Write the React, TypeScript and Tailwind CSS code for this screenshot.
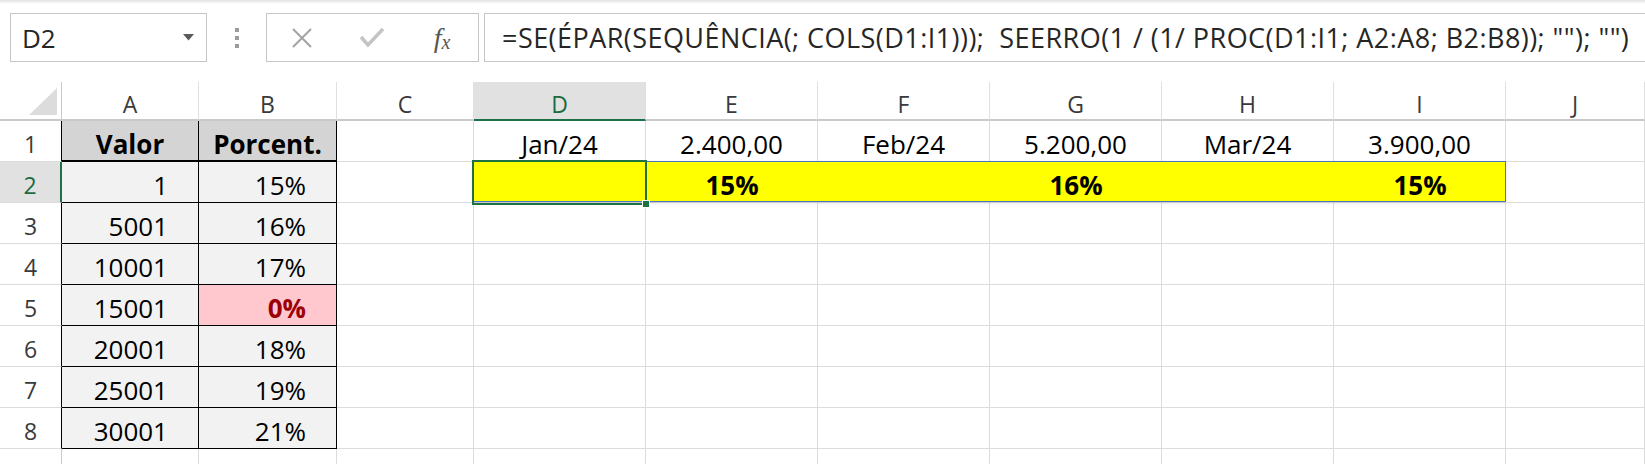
import React from 'react';

// column template shared by the header row and every sheet row
const GRID = 'grid grid-cols-[62px_137px_138px_137px_repeat(6,172px)_1fr]';
const LETTERS = ['A', 'B', 'C', 'D', 'E', 'F', 'G', 'H', 'I', 'J'];

const LOOKUP: [string, string][] = [
  ['1', '15%'],
  ['5001', '16%'],
  ['10001', '17%'],
  ['15001', '0%'],
  ['20001', '18%'],
  ['25001', '19%'],
  ['30001', '21%'],
];

const MONTHS = ['Jan/24', '2.400,00', 'Feb/24', '5.200,00', 'Mar/24', '3.900,00'];
const RESULTS = ['', '15%', '', '16%', '', '15%'];

const FORMULA = '=SE(ÉPAR(SEQUÊNCIA(; COLS(D1:I1)));  SEERRO(1 / (1/ PROC(D1:I1; A2:A8; B2:B8)); ""); "")';

const GRIDLINE = 'border-r border-b border-[#dcdcdc]';

function Toolbar() {
  return (
    <div className="h-[82px]">
      <div className="h-[4px] bg-gradient-to-b from-[#e2e2e2] to-white" />
      <div className="flex items-start pt-[9px] pl-[10px]">
        {/* name box */}
        <div className="w-[197px] h-[49px] border border-[#c6c6c6] flex items-center justify-between pl-[11px] pr-[12px]">
          <span className="text-[26px] leading-none text-[#262626]">D2</span>
          <svg width="11" height="7" viewBox="0 0 11 7">
            <path d="M0 0 L11 0 L5.5 6.5 Z" fill="#5a5a5a" />
          </svg>
        </div>
        <div className="w-[59px] h-[49px] flex flex-col items-center justify-center gap-[4px]">
          <span className="w-[4px] h-[4px] bg-[#9c9c9c]" />
          <span className="w-[4px] h-[4px] bg-[#9c9c9c]" />
          <span className="w-[4px] h-[4px] bg-[#9c9c9c]" />
        </div>
        {/* cancel / enter / insert function */}
        <div className="w-[213px] h-[49px] border border-[#c6c6c6] flex items-center">
          <div className="w-[70px] flex justify-center">
            <svg width="22" height="20" viewBox="0 0 22 20">
              <path d="M2 1 L20 19 M20 1 L2 19" stroke="#a3a3a3" strokeWidth="2" fill="none" />
            </svg>
          </div>
          <div className="w-[70px] flex justify-center">
            <svg width="26" height="21" viewBox="0 0 26 21">
              <path d="M2 10 L9 18 L24 2" stroke="#c4c4c4" strokeWidth="3.5" fill="none" />
            </svg>
          </div>
          <div className="w-[70px] flex justify-center items-center font-['Liberation_Serif',serif] italic text-[#575757]">
            <span className="text-[28px] leading-none">f</span>
            <span className="text-[20px] leading-none mt-[8px]">x</span>
          </div>
        </div>
        {/* formula bar */}
        <div className="ml-[5px] flex-1 h-[49px] border border-r-0 border-[#c6c6c6] flex items-center pl-[17px] overflow-hidden">
          <span className="whitespace-pre text-[27px] tracking-[0.45px] leading-none text-[#262626]">{FORMULA}</span>
        </div>
      </div>
    </div>
  );
}

function ColumnHeaders() {
  return (
    <div className={`${GRID} h-[39px]`}>
      <div className="relative border-r border-b-2 border-[#c9c9c9]">
        <svg className="absolute inset-0" width="62" height="39" viewBox="0 0 62 39">
          <path d="M57 6 L57 33 L29 33 Z" fill="#dcdcdc" />
        </svg>
      </div>
      {LETTERS.map((l) => {
        const active = l === 'D';
        return (
          <div
            key={l}
            className={`flex justify-center items-center pt-[7px] text-[23px] leading-none border-r border-r-[#e0e0e0] border-b-2 ${
              active ? 'bg-[#e1e1e1] text-[#1d6b3f] border-b-[#1e7145]' : 'text-[#3a3a3a] border-b-[#c9c9c9]'
            }`}
          >
            {l}
          </div>
        );
      })}
    </div>
  );
}

function RowHeader({ n }: { n: number }) {
  const active = n === 2;
  const edge = active ? 'border-r-2 border-r-[#1e7145]' : n <= 8 ? 'border-r border-r-black' : 'border-r border-r-[#c9c9c9]';
  return (
    <div
      className={`flex justify-center items-center pt-[6px] text-[23px] leading-none border-b border-b-[#dcdcdc] ${edge} ${
        active ? 'bg-[#e1e1e1] text-[#1d6b3f]' : 'text-[#3a3a3a]'
      }`}
    >
      {n}
    </div>
  );
}

function TableCell({ row, col }: { row: number; col: 0 | 1 }) {
  if (row === 1) {
    return (
      <div className="flex justify-center items-center pt-[6px] font-bold bg-[#d4d4d4] border-r border-b-2 border-black">
        {col === 0 ? 'Valor' : 'Porcent.'}
      </div>
    );
  }
  const value = LOOKUP[row - 2][col];
  const bad = col === 1 && value === '0%';
  return (
    <div
      className={`flex justify-end items-center pt-[6px] pr-[30px] border-r border-b border-black ${
        bad ? 'bg-[#ffc7ce] text-[#9c0006] font-bold' : 'bg-[#f2f2f2]'
      }`}
    >
      {value}
    </div>
  );
}

function Blank() {
  return <div className={GRIDLINE} />;
}

function SheetRow({ n }: { n: number }) {
  const inTable = n <= 8;
  return (
    <div className={`${GRID} h-[41px]`}>
      <RowHeader n={n} />
      {inTable ? <TableCell row={n} col={0} /> : <Blank />}
      {inTable ? <TableCell row={n} col={1} /> : <Blank />}
      <Blank />
      {n === 1 &&
        MONTHS.map((m) => (
          <div key={m} className={`flex justify-center items-center pt-[6px] ${GRIDLINE}`}>
            {m}
          </div>
        ))}
      {n === 2 && (
        <div className="col-span-6 relative grid grid-cols-6 bg-[#ffff00] border-b border-[#dcdcdc]">
          {RESULTS.map((r, i) => (
            <div key={i} className="flex justify-center items-center pt-[6px] font-bold">
              {r}
            </div>
          ))}
          {/* spill range outline */}
          <div className="absolute -top-px -left-px right-0 bottom-0 border border-[#4a76c6] shadow-[0_1px_3px_rgba(0,0,0,0.12)] pointer-events-none" />
          {/* active cell D2 */}
          <div className="absolute -top-[2px] -left-[2px] w-[175px] h-[45px] border-2 border-[#1e7145] pointer-events-none">
            <div className="absolute -right-[5px] -bottom-[5px] w-[8px] h-[8px] bg-[#1e7145] border border-white" />
          </div>
        </div>
      )}
      {n > 2 && Array.from({ length: 6 }, (_, i) => <Blank key={i} />)}
      <Blank />
    </div>
  );
}

export default function App() {
  return (
    <div className="w-[1645px] h-[464px] overflow-hidden bg-white font-['Open_Sans',sans-serif] text-[26px] leading-none text-black">
      <Toolbar />
      <ColumnHeaders />
      {Array.from({ length: 9 }, (_, i) => (
        <SheetRow key={i} n={i + 1} />
      ))}
    </div>
  );
}
